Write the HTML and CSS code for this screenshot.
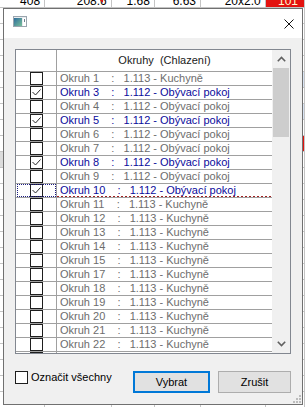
FILE: index.html
```html
<!DOCTYPE html>
<html lang="cs">
<head>
<meta charset="utf-8">
<title>Okruhy</title>
<link rel="stylesheet" href="styles.css">
</head>
<body>
<div class="sheet">
  <div class="srow first">
    <div class="sc c1">408</div><div class="sc c2">208.6<span class="mark"></span></div><div class="sc c3">1.68</div><div class="sc c4">6.63</div><div class="sc c5">20x2.0</div><div class="sc c6 red">101</div>
  </div>
  <div class="srow"><div class="sc c1"></div><div class="sc c2"></div><div class="sc c3"></div><div class="sc c4"></div><div class="sc c5"></div><div class="sc c6"></div></div>
  <div class="srow"><div class="sc c1"></div><div class="sc c2"></div><div class="sc c3"></div><div class="sc c4"></div><div class="sc c5"></div><div class="sc c6"></div></div>
  <div class="srow"><div class="sc c1"></div><div class="sc c2"></div><div class="sc c3"></div><div class="sc c4"></div><div class="sc c5"></div><div class="sc c6"></div></div>
  <div class="srow"><div class="sc c1"></div><div class="sc c2"></div><div class="sc c3"></div><div class="sc c4"></div><div class="sc c5"></div><div class="sc c6"></div></div>
  <div class="srow"><div class="sc c1"></div><div class="sc c2"></div><div class="sc c3"></div><div class="sc c4"></div><div class="sc c5"></div><div class="sc c6 blue"></div></div>
  <div class="srow"><div class="sc c1"></div><div class="sc c2"></div><div class="sc c3"></div><div class="sc c4"></div><div class="sc c5"></div><div class="sc c6"></div></div>
  <div class="srow"><div class="sc c1"></div><div class="sc c2"></div><div class="sc c3"></div><div class="sc c4"></div><div class="sc c5"></div><div class="sc c6 blue"></div></div>
  <div class="srow"><div class="sc c1"></div><div class="sc c2"></div><div class="sc c3"></div><div class="sc c4"></div><div class="sc c5"></div><div class="sc c6"></div></div>
  <div class="srow"><div class="sc c1"></div><div class="sc c2"></div><div class="sc c3"></div><div class="sc c4"></div><div class="sc c5"></div><div class="sc c6 red"></div></div>
  <div class="srow"><div class="sc c1 sel"></div><div class="sc c2"></div><div class="sc c3"></div><div class="sc c4"></div><div class="sc c5"></div><div class="sc c6"></div></div>
  <div class="srow"><div class="sc c1"></div><div class="sc c2"></div><div class="sc c3"></div><div class="sc c4"></div><div class="sc c5"></div><div class="sc c6"></div></div>
  <div class="srow"><div class="sc c1"></div><div class="sc c2"></div><div class="sc c3"></div><div class="sc c4"></div><div class="sc c5"></div><div class="sc c6"></div></div>
  <div class="srow"><div class="sc c1"></div><div class="sc c2"></div><div class="sc c3"></div><div class="sc c4"></div><div class="sc c5"></div><div class="sc c6"></div></div>
  <div class="srow"><div class="sc c1"></div><div class="sc c2"></div><div class="sc c3"></div><div class="sc c4"></div><div class="sc c5"></div><div class="sc c6"></div></div>
  <div class="srow"><div class="sc c1"></div><div class="sc c2"></div><div class="sc c3"></div><div class="sc c4"></div><div class="sc c5"></div><div class="sc c6"></div></div>
  <div class="srow"><div class="sc c1"></div><div class="sc c2"></div><div class="sc c3"></div><div class="sc c4"></div><div class="sc c5"></div><div class="sc c6"></div></div>
  <div class="srow"><div class="sc c1"></div><div class="sc c2"></div><div class="sc c3"></div><div class="sc c4"></div><div class="sc c5"></div><div class="sc c6"></div></div>
  <div class="srow"><div class="sc c1"></div><div class="sc c2"></div><div class="sc c3"></div><div class="sc c4"></div><div class="sc c5"></div><div class="sc c6"></div></div>
  <div class="srow"><div class="sc c1"></div><div class="sc c2"></div><div class="sc c3"></div><div class="sc c4"></div><div class="sc c5"></div><div class="sc c6"></div></div>
  <div class="srow"><div class="sc c1"></div><div class="sc c2"></div><div class="sc c3"></div><div class="sc c4"></div><div class="sc c5"></div><div class="sc c6"></div></div>
  <div class="srow"><div class="sc c1"></div><div class="sc c2"></div><div class="sc c3"></div><div class="sc c4"></div><div class="sc c5"></div><div class="sc c6"></div></div>
  <div class="srow"><div class="sc c1"></div><div class="sc c2"></div><div class="sc c3"></div><div class="sc c4"></div><div class="sc c5"></div><div class="sc c6"></div></div>
  <div class="srow"><div class="sc c1"></div><div class="sc c2"></div><div class="sc c3"></div><div class="sc c4"></div><div class="sc c5"></div><div class="sc c6"></div></div>
  <div class="srow"><div class="sc c1"></div><div class="sc c2"></div><div class="sc c3"></div><div class="sc c4"></div><div class="sc c5"></div><div class="sc c6"></div></div>
  <div class="srow"><div class="sc c1"></div><div class="sc c2"></div><div class="sc c3"></div><div class="sc c4"></div><div class="sc c5"></div><div class="sc c6"></div></div>
  <div class="srow"><div class="sc c1"></div><div class="sc c2"></div><div class="sc c3"></div><div class="sc c4"></div><div class="sc c5"></div><div class="sc c6"></div></div>
</div>

<div class="dialog">
  <div class="titlebar">
    <svg class="appicon" width="14" height="11" viewBox="0 0 14 11">
      <defs>
        <linearGradient id="g" x1="0" y1="0" x2="1" y2="1">
          <stop offset="0" stop-color="#2e6c9c"/>
          <stop offset="1" stop-color="#79c09a"/>
        </linearGradient>
      </defs>
      <rect x="0.5" y="0.5" width="13" height="10" fill="#e8ecef" stroke="#9aa5ae"/>
      <rect x="1" y="2" width="8" height="8" fill="url(#g)"/>
      <rect x="10" y="2" width="3" height="8" fill="#ffffff"/>
      <rect x="11" y="3" width="1" height="3" fill="#6d7f8c"/>
    </svg>
    <svg class="close" width="10" height="10" viewBox="0 0 10 10">
      <path d="M0.5 0.5 L9.5 9.5 M9.5 0.5 L0.5 9.5" stroke="#111" stroke-width="1" fill="none"/>
    </svg>
  </div>
  <div class="body">
    <div class="list">
      <div class="lmain">
        <div class="hdr"><div class="hc"></div><div class="ht">Okruhy  (Chlazení)</div></div>
        <div class="row"><div class="cc"><span class="cb"></span></div><div class="tc">Okruh 1    :   1.113 - Kuchyně</div></div>
        <div class="row on"><div class="cc"><span class="cb"><svg width="11" height="11" viewBox="0 0 11 11"><polyline points="1.5,5 4.5,8 9.5,2.5" fill="none" stroke="#2b2b2b" stroke-width="1"/></svg></span></div><div class="tc">Okruh 3    :   1.112 - Obývací pokoj</div></div>
        <div class="row"><div class="cc"><span class="cb"></span></div><div class="tc">Okruh 4    :   1.112 - Obývací pokoj</div></div>
        <div class="row on"><div class="cc"><span class="cb"><svg width="11" height="11" viewBox="0 0 11 11"><polyline points="1.5,5 4.5,8 9.5,2.5" fill="none" stroke="#2b2b2b" stroke-width="1"/></svg></span></div><div class="tc">Okruh 5    :   1.112 - Obývací pokoj</div></div>
        <div class="row"><div class="cc"><span class="cb"></span></div><div class="tc">Okruh 6    :   1.112 - Obývací pokoj</div></div>
        <div class="row"><div class="cc"><span class="cb"></span></div><div class="tc">Okruh 7    :   1.112 - Obývací pokoj</div></div>
        <div class="row on"><div class="cc"><span class="cb"><svg width="11" height="11" viewBox="0 0 11 11"><polyline points="1.5,5 4.5,8 9.5,2.5" fill="none" stroke="#2b2b2b" stroke-width="1"/></svg></span></div><div class="tc">Okruh 8    :   1.112 - Obývací pokoj</div></div>
        <div class="row"><div class="cc"><span class="cb"></span></div><div class="tc">Okruh 9    :   1.112 - Obývací pokoj</div></div>
        <div class="row on focus"><div class="cc"><span class="cb"><svg width="11" height="11" viewBox="0 0 11 11"><polyline points="1.5,5 4.5,8 9.5,2.5" fill="none" stroke="#2b2b2b" stroke-width="1"/></svg></span></div><div class="tc">Okruh 10    :   1.112 - Obývací pokoj</div></div>
        <div class="row"><div class="cc"><span class="cb"></span></div><div class="tc">Okruh 11    :   1.113 - Kuchyně</div></div>
        <div class="row"><div class="cc"><span class="cb"></span></div><div class="tc">Okruh 12    :   1.113 - Kuchyně</div></div>
        <div class="row"><div class="cc"><span class="cb"></span></div><div class="tc">Okruh 13    :   1.113 - Kuchyně</div></div>
        <div class="row"><div class="cc"><span class="cb"></span></div><div class="tc">Okruh 14    :   1.113 - Kuchyně</div></div>
        <div class="row"><div class="cc"><span class="cb"></span></div><div class="tc">Okruh 15    :   1.113 - Kuchyně</div></div>
        <div class="row"><div class="cc"><span class="cb"></span></div><div class="tc">Okruh 17    :   1.113 - Kuchyně</div></div>
        <div class="row"><div class="cc"><span class="cb"></span></div><div class="tc">Okruh 18    :   1.113 - Kuchyně</div></div>
        <div class="row"><div class="cc"><span class="cb"></span></div><div class="tc">Okruh 19    :   1.113 - Kuchyně</div></div>
        <div class="row"><div class="cc"><span class="cb"></span></div><div class="tc">Okruh 20    :   1.113 - Kuchyně</div></div>
        <div class="row"><div class="cc"><span class="cb"></span></div><div class="tc">Okruh 21    :   1.113 - Kuchyně</div></div>
        <div class="row"><div class="cc"><span class="cb"></span></div><div class="tc">Okruh 22    :   1.113 - Kuchyně</div></div>
        <div class="row"><div class="cc"><span class="cb"></span></div><div class="tc">Okruh 23    :   1.113 - Kuchyně</div></div>
      </div>
      <div class="sbar">
        <div class="sbtn"><svg width="9" height="6" viewBox="0 0 9 6"><polyline points="0.8,5.2 4.5,1.5 8.2,5.2" fill="none" stroke="#606060" stroke-width="1.6"/></svg></div>
        <div class="thumb"></div>
        <div class="track"></div>
        <div class="sbtn"><svg width="9" height="6" viewBox="0 0 9 6"><polyline points="0.8,0.8 4.5,4.5 8.2,0.8" fill="none" stroke="#606060" stroke-width="1.6"/></svg></div>
      </div>
    </div>
    <div class="foot">
      <label class="all"><span class="cb"></span><span>Označit všechny</span></label>
      <div class="btns">
        <button class="btn primary">Vybrat</button>
        <button class="btn cancel">Zrušit</button>
      </div>
    </div>
    <svg class="grip" width="9" height="9" viewBox="0 0 9 9">
      <rect x="7" y="1" width="2" height="2" fill="#bcbcbc"/>
      <rect x="4" y="4" width="2" height="2" fill="#bcbcbc"/>
      <rect x="7" y="4" width="2" height="2" fill="#bcbcbc"/>
      <rect x="1" y="7" width="2" height="2" fill="#bcbcbc"/>
      <rect x="4" y="7" width="2" height="2" fill="#bcbcbc"/>
      <rect x="7" y="7" width="2" height="2" fill="#bcbcbc"/>
    </svg>
  </div>
</div>
</body>
</html>
```

FILE: styles.css
```css
* { box-sizing: border-box; }
html, body { margin: 0; padding: 0; }
body {
  width: 305px;
  height: 407px;
  overflow: hidden;
  position: relative;
  background: #ffffff;
  font-family: "Liberation Sans", Arial, sans-serif;
}

/* background spreadsheet */
.sheet { margin-top: -8px; }
.srow {
  display: flex;
  height: 16px;
  border-bottom: 1px solid #c4c4c4;
}
.sc {
  height: 15px;
  border-right: 1px solid #c4c4c4;
  text-align: right;
  font-size: 12px;
  line-height: 15px;
  padding: 2px 4px 0 0;
  color: #000;
  position: relative;
}
.c1 { width: 46px; }
.c2 { width: 68px; }
.c3 { width: 44px; }
.c4 { width: 47px; }
.c5 { width: 66px; }
.c6 { width: 40px; padding-right: 6px; }
.sc.red { background: #e3120f; color: #fff8d0; }
.sc.blue { background: #d9e4f4; }
.sc.sel { background: #dcdcdc; }
.mark {
  position: absolute;
  right: 8px;
  top: 8px;
  width: 0;
  height: 0;
  border-left: 3px solid transparent;
  border-top: 3px solid #e01010;
}

/* dialog */
.dialog {
  position: absolute;
  left: 3px;
  top: 8px;
  width: 300px;
  height: 397px;
  border: 1px solid #707070;
  background: #f0f0f0;
  display: flex;
  flex-direction: column;
}
.titlebar {
  height: 29px;
  background: #ffffff;
  display: flex;
  align-items: flex-start;
  padding-left: 9px;
}
.appicon { margin-top: 7px; display: block; }
.close { margin-left: auto; margin-right: 8px; margin-top: 10px; display: block; }

.body {
  flex: 1;
  position: relative;
  padding: 11px 11px 11px 11px;
  display: flex;
  flex-direction: column;
}

.list {
  display: flex;
  height: 305px;
  border: 1px solid #828790;
  background: #ffffff;
}
.lmain { flex: 1; overflow: hidden; }
.hdr {
  display: flex;
  height: 22px;
  border-bottom: 1px solid #a0a0a0;
}
.hc { width: 41px; border-right: 1px solid #a0a0a0; }
.ht {
  flex: 1;
  text-align: center;
  white-space: pre;
  font-size: 11px;
  line-height: 21px;
  color: #1a1a1a;
}
.row {
  display: flex;
  height: 14px;
  border-bottom: 1px solid #a0a0a0;
}
.cc {
  width: 41px;
  height: 13px;
  border-right: 1px solid #a0a0a0;
  padding-left: 14px;
  position: relative;
}
.cb {
  display: block;
  width: 13px;
  height: 13px;
  border: 1px solid #1e1e1e;
  background: #ffffff;
}
.cb svg { display: block; }
.tc {
  flex: 1;
  height: 13px;
  padding-left: 3px;
  white-space: pre;
  font-size: 11px;
  line-height: 13px;
  color: #6d6d6d;
  position: relative;
}
.row.on .tc { color: #0b0b9c; }
.row.focus .cc::after {
  content: "";
  position: absolute;
  left: 1px;
  top: 0;
  right: 0;
  bottom: 0;
  border: 1px dotted #1a1a80;
}
.row.focus .tc::after {
  content: "";
  position: absolute;
  left: 0;
  right: 0;
  bottom: 0;
  height: 1px;
  background: repeating-linear-gradient(90deg, #a02020 0 2px, transparent 2px 4px);
}

.sbar {
  width: 18px;
  background: #f0f0f0;
  display: flex;
  flex-direction: column;
}
.sbtn {
  height: 18px;
  display: flex;
  align-items: center;
  justify-content: center;
}
.sbtn svg { display: block; }
.thumb {
  height: 69px;
  margin: 0 1px;
  background: #cdcdcd;
}
.track { flex: 1; }

.foot {
  display: flex;
  align-items: flex-start;
  margin-top: 17px;
  height: 22px;
}
.all {
  display: flex;
  gap: 3px;
  font-size: 11px;
  line-height: 13px;
  color: #000;
}
.btns {
  margin-left: auto;
  display: flex;
  gap: 8px;
}
.btn {
  height: 22px;
  margin: 0;
  padding: 0;
  background: #e1e1e1;
  border: 1px solid #adadad;
  font-family: "Liberation Sans", Arial, sans-serif;
  font-size: 11px;
  color: #000;
}
.btn.primary { width: 77px; border: 2px solid #0078d7; }
.btn.cancel { width: 73px; }
.grip {
  position: absolute;
  right: 1px;
  bottom: 1px;
  display: block;
}
```
